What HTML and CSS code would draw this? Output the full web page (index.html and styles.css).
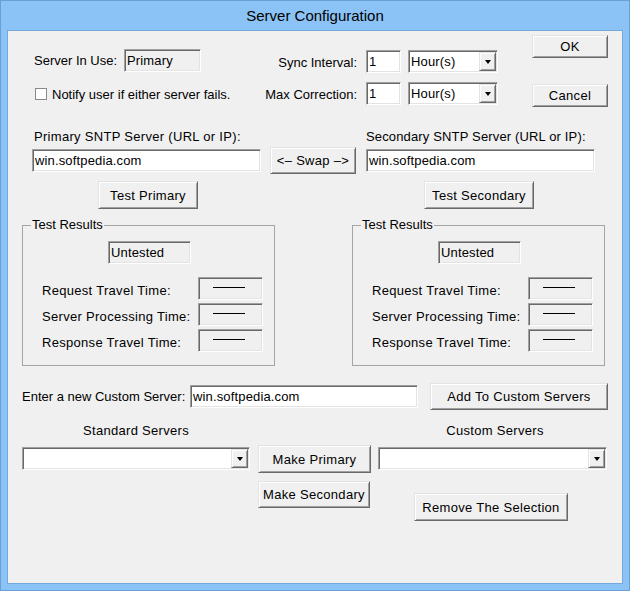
FILE: index.html
```html
<!DOCTYPE html>
<html>
<head>
<meta charset="utf-8">
<title>Server Configuration</title>
<link rel="stylesheet" href="styles.css">
</head>
<body>
<div class="window">
  <div class="titlebar">Server Configuration</div>
  <div class="client">

    <section class="s1">
      <div class="col-a">
        <div class="row">
          <span class="lbl w-inuse">Server In Use:</span>
          <span class="readout w-primary">Primary</span>
        </div>
        <div class="row check-row">
          <span class="checkbox"></span>
          <span class="notify">Notify user if either server fails.</span>
        </div>
      </div>
      <div class="col-b">
        <div class="row">
          <span class="lbl right">Sync Interval:</span>
          <span class="edit w-num">1</span>
          <span class="combo w-unit"><span class="val">Hour(s)</span><span class="drop"><span class="tri"></span></span></span>
        </div>
        <div class="row row-gap">
          <span class="lbl right">Max Correction:</span>
          <span class="edit w-num">1</span>
          <span class="combo w-unit"><span class="val">Hour(s)</span><span class="drop"><span class="tri"></span></span></span>
        </div>
      </div>
      <div class="col-c">
        <button class="btn btn-dlg">OK</button>
        <button class="btn btn-dlg cancel">Cancel</button>
      </div>
    </section>

    <section class="s2">
      <div class="srv-col primary">
        <div class="srv-label">Primary SNTP Server (URL or IP):</div>
        <div class="edit srv-edit">win.softpedia.com</div>
        <button class="btn test-btn test-primary">Test Primary</button>
      </div>
      <button class="btn swap">&lt;&#8211; Swap &#8211;&gt;</button>
      <div class="srv-col secondary">
        <div class="srv-label">Secondary SNTP Server (URL or IP):</div>
        <div class="edit srv-edit">win.softpedia.com</div>
        <button class="btn test-btn test-secondary">Test Secondary</button>
      </div>
    </section>

    <section class="s3">
      <fieldset class="group">
        <legend>Test Results</legend>
        <div class="readout status">Untested</div>
        <div class="results">
          <span class="res-lbl">Request Travel Time:</span><span class="readout res-box"><span class="dash"></span></span>
          <span class="res-lbl">Server Processing Time:</span><span class="readout res-box"><span class="dash"></span></span>
          <span class="res-lbl">Response Travel Time:</span><span class="readout res-box"><span class="dash"></span></span>
        </div>
      </fieldset>
      <fieldset class="group">
        <legend>Test Results</legend>
        <div class="readout status">Untested</div>
        <div class="results">
          <span class="res-lbl">Request Travel Time:</span><span class="readout res-box"><span class="dash"></span></span>
          <span class="res-lbl">Server Processing Time:</span><span class="readout res-box"><span class="dash"></span></span>
          <span class="res-lbl">Response Travel Time:</span><span class="readout res-box"><span class="dash"></span></span>
        </div>
      </fieldset>
    </section>

    <section class="s4">
      <span class="lbl custom-lbl">Enter a new Custom Server:</span>
      <span class="edit custom-edit">win.softpedia.com</span>
      <button class="btn add-btn">Add To Custom Servers</button>
    </section>

    <section class="s5">
      <div class="list-col std">
        <div class="list-label">Standard Servers</div>
        <span class="combo list-combo"><span class="val"></span><span class="drop"><span class="tri"></span></span></span>
      </div>
      <div class="mid-col">
        <button class="btn make-primary">Make Primary</button>
        <button class="btn make-secondary">Make Secondary</button>
      </div>
      <div class="list-col cust">
        <div class="list-label">Custom Servers</div>
        <span class="combo list-combo"><span class="val"></span><span class="drop"><span class="tri"></span></span></span>
        <button class="btn remove-btn">Remove The Selection</button>
      </div>
    </section>

  </div>
</div>
</body>
</html>
```

FILE: styles.css
```css
* { box-sizing: border-box; }
html, body { margin: 0; padding: 0; background: #8bc3f6; }
body {
  font-family: "Liberation Sans", Arial, sans-serif;
  font-size: 13px;
  color: #000;
}

.window {
  width: 630px;
  height: 591px;
  border: 1px solid #6a9fd3;
  background: #8bc3f6;
  padding: 0 6px;
  display: flex;
  flex-direction: column;
}
.titlebar {
  height: 29px;
  line-height: 30px;
  text-align: center;
  font-size: 15px;
  color: #000;
}
.client {
  width: 616px;
  height: 554px;
  border: 1px solid #74a9dc;
  background: #f0f0f0;
  letter-spacing: 0.3px;
}

/* shared controls */
.row { display: flex; align-items: center; height: 23px; }
.lbl { white-space: nowrap; line-height: 16px; letter-spacing: 0; }
.right { text-align: right; }

.edit, .readout, .combo {
  display: inline-flex;
  align-items: center;
  height: 23px;
  padding-left: 2px;
  border: 1px solid;
  border-color: #a0a0a0 #fff #fff #a0a0a0;
  box-shadow: inset 1px 1px 0 #696969, inset -1px -1px 0 #e3e3e3;
  white-space: nowrap;
  letter-spacing: 0.15px;
}
.edit, .combo { background: #fff; }
.readout { background: #f0f0f0; }

.combo { position: relative; padding-left: 2px; }
.combo .val { flex: 1; }
.drop {
  width: 17px;
  height: 19px;
  margin-right: 1px;
  background: #f0f0f0;
  border: 1px solid;
  border-color: #e3e3e3 #696969 #696969 #e3e3e3;
  box-shadow: inset 1px 1px 0 #fff, inset -1px -1px 0 #a0a0a0;
  display: flex;
  align-items: center;
  justify-content: center;
}
.tri {
  width: 0; height: 0;
  border-left: 3.5px solid transparent;
  border-right: 3.5px solid transparent;
  border-top: 4px solid #000;
  margin-top: 1px;
}

.btn {
  font: inherit;
  letter-spacing: inherit;
  color: #000;
  background: #f0f0f0;
  border: 1px solid;
  border-color: #e3e3e3 #696969 #696969 #e3e3e3;
  box-shadow: inset 1px 1px 0 #fff, inset -1px -1px 0 #a0a0a0;
  padding: 0;
  margin: 0;
  display: block;
  white-space: nowrap;
}

/* section 1 */
.s1 { display: flex; height: 96px; }
.col-a { margin-left: 26px; margin-top: 18px; width: 223px; }
.w-inuse { width: 90px; }
.w-primary { width: 77px; }
.check-row { margin-top: 14px; height: 16px; }
.checkbox {
  width: 12px; height: 12px;
  margin-left: 1px; margin-right: 5px;
  background: #fff;
  border: 1px solid #8a8a8a;
}
.notify { letter-spacing: 0; }
.col-b { margin-top: 19px; width: 241px; }
.col-b .lbl { width: 100px; margin-right: 9px; padding-top: 3px; }
.row-gap { margin-top: 9px; }
.w-num { width: 35px; }
.w-unit { width: 90px; margin-left: 7px; }
.col-c { margin-left: 34px; margin-top: 4px; }
.btn-dlg { width: 76px; height: 23px; }
.cancel { margin-top: 26px; }

/* section 2 */
.s2 { display: flex; height: 87px; }
.srv-col { width: 229px; }
.srv-col.primary { margin-left: 24px; }
.srv-col.secondary { margin-left: 10px; }
.srv-label { margin-top: 2px; line-height: 16px; white-space: nowrap; }
.primary .srv-label { margin-left: 2px; }
.secondary .srv-label { letter-spacing: 0.15px; }
.srv-edit { display: flex; width: 229px; margin-top: 4px; }
.test-btn { height: 28px; margin-top: 9px; }
.test-primary { width: 100px; margin-left: 66px; }
.test-secondary { width: 110px; margin-left: 58px; }
.swap { width: 86px; height: 27px; margin-left: 9px; margin-top: 20px; }

/* section 3 */
.s3 { display: flex; gap: 77px; padding-left: 14px; height: 152px; }
.group {
  width: 253px;
  margin: 4px 0 0 0;
  padding: 9px 0 12px 0;
  border: 1px solid #a5a5a5;
  min-width: 0;
}
.group legend {
  padding: 0 1px;
  margin-left: 8px;
  line-height: 14px;
  letter-spacing: 0;
}
.status { width: 83px; margin-left: 85px; }
.results {
  display: grid;
  grid-template-columns: 156px 65px;
  row-gap: 3px;
  margin-top: 13px;
  margin-left: 19px;
  align-items: center;
}
.res-lbl { white-space: nowrap; line-height: 16px; padding-top: 5px; letter-spacing: 0.3px; }
.res-box { height: 23px; padding-left: 0; align-items: flex-start; }
.dash {
  display: block;
  width: 32px;
  height: 0;
  border-top: 1px solid #000;
  margin-left: 14px;
  margin-top: 9px;
}

/* section 4 */
.s4 { display: flex; align-items: center; height: 44px; padding-top: 17px; }
.s4 > * { flex: none; }
.custom-lbl { margin-left: 14px; width: 168px; padding-top: 1px; }
.custom-edit { width: 228px; }
.add-btn { width: 178px; height: 27px; margin-left: 12px; }

/* section 5 */
.s5 { display: flex; }
.list-col { display: flex; flex-direction: column; }
.list-col.std { margin-left: 14px; width: 228px; }
.list-col.cust { margin-left: 7px; width: 229px; }
.list-label { margin-top: 13px; line-height: 16px; text-align: center; }
.cust .list-label { padding-left: 5px; }
.list-combo { margin-top: 8px; width: 100%; }
.mid-col { margin-left: 8px; width: 113px; }
.make-primary { width: 113px; height: 28px; margin-top: 35px; }
.make-secondary { width: 112px; height: 27px; margin-top: 8px; }
.remove-btn { width: 154px; height: 28px; margin-top: 23px; margin-left: 36px; }
```
